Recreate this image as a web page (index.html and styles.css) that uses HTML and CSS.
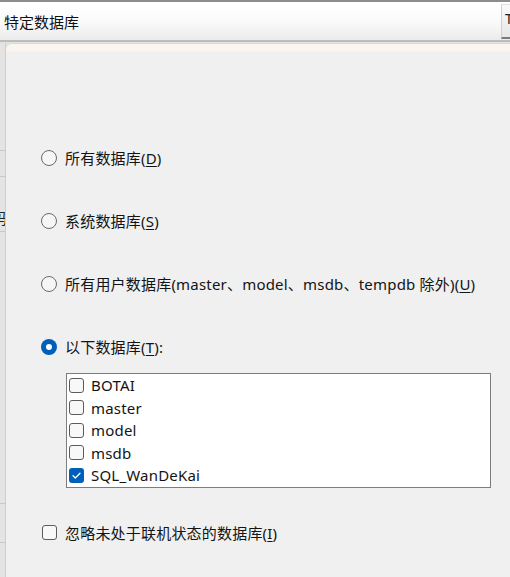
FILE: index.html
```html
<!DOCTYPE html>
<html lang="zh-CN">
<head>
<meta charset="utf-8">
<title>特定数据库</title>
<link rel="stylesheet" href="styles.css">
</head>
<body>
<div class="topbar">
  <span class="title">特定数据库</span>
  <span class="tbtn"><span class="tglyph">T</span></span>
</div>
<div class="main">
  <div class="strip">
    <div class="cell h108"></div>
    <div class="cell h26"></div>
    <div class="cell h54"><span class="sglyph">码</span></div>
    <div class="cell h272"></div>
    <div class="cell h39"></div>
  </div>
  <div class="panel">
    <label class="opt"><span class="radio"></span><span class="txt">所有数据库(<u>D</u>)</span></label>
    <label class="opt"><span class="radio"></span><span class="txt">系统数据库(<u>S</u>)</span></label>
    <label class="opt"><span class="radio"></span><span class="txt">所有用户数据库(master、model、msdb、tempdb 除外)(<u>U</u>)</span></label>
    <label class="opt"><span class="radio on"></span><span class="txt">以下数据库(<u>T</u>):</span></label>
    <div class="listbox">
      <div class="item"><span class="cb"></span><span class="txt">BOTAI</span></div>
      <div class="item"><span class="cb"></span><span class="txt">master</span></div>
      <div class="item"><span class="cb"></span><span class="txt">model</span></div>
      <div class="item"><span class="cb"></span><span class="txt">msdb</span></div>
      <div class="item"><span class="cb on"><svg viewBox="0 0 15 15" width="15" height="15"><path d="M4 7.8 L6.3 10 L11 5.2" fill="none" stroke="#fff" stroke-width="1.3" stroke-linecap="round" stroke-linejoin="round"/></svg></span><span class="txt">SQL_WanDeKai</span></div>
    </div>
    <label class="opt chk"><span class="cb"></span><span class="txt">忽略未处于联机状态的数据库(<u>I</u>)</span></label>
  </div>
</div>
</body>
</html>
```

FILE: styles.css
```css
* { box-sizing: border-box; }
html, body {
  margin: 0;
  padding: 0;
}
body {
  width: 510px;
  height: 577px;
  overflow: hidden;
  background: #e2e2e2;
  font-family: "Noto Sans", "Noto Sans CJK SC", sans-serif;
  font-size: 15px;
  color: #141414;
}
.topbar {
  height: 42px;
  border-top: 2px solid #8c8c8c;
  border-bottom: 2px solid #bcbcbc;
  background: linear-gradient(#ffffff, #fcfcfc 45%, #ebebeb);
  display: flex;
  align-items: center;
  justify-content: space-between;
  padding-left: 4px;
}
.title {
  font-family: "Noto Sans CJK SC", sans-serif;
  font-size: 15px;
  color: #111;
  line-height: 20px;
  margin-top: 1px;
}
.tbtn {
  width: 9px;
  height: 35px;
  margin-top: 1px;
  border-left: 1px solid #d0d0d0;
  border-top: 1px solid #e0e0e0;
  border-bottom: 2px solid #7a7a7a;
  background: linear-gradient(#fafafa, #e6e6e6);
  overflow: hidden;
  display: flex;
  align-items: center;
  padding-left: 3px;
}
.tglyph {
  font-size: 14px;
  color: #222;
  margin-top: -6px;
}
.main {
  display: flex;
  height: 535px;
  padding-top: 1px;
}
.strip {
  width: 6px;
  flex: none;
  display: flex;
  flex-direction: column;
  background: #e4e4e4;
  border-right: 1px solid #cdcdcd;
  overflow: hidden;
}
.cell {
  border-bottom: 1px solid #c6c6c6;
  flex: none;
  overflow: hidden;
  position: relative;
}
.h108 { height: 108px; }
.h26 { height: 26px; }
.h54 { height: 55px; }
.h272 { height: 272px; }
.h39 { height: 39px; }
.sglyph {
  display: block;
  font-family: "Noto Sans CJK SC", sans-serif;
  font-size: 15px;
  line-height: 20px;
  margin-top: 31px;
  margin-left: -8px;
  color: #222;
}
.panel {
  flex: 1;
  border-top-left-radius: 6px;
  border-top: 1px solid #dadada;
  background: linear-gradient(#faf5ee 0, #faf5ee 7px, #f0f0f0 8px);
  padding: 103px 0 0 35px;
  display: flex;
  flex-direction: column;
  align-items: flex-start;
}
.opt {
  display: flex;
  align-items: center;
  height: 22px;
  gap: 8px;
  margin-bottom: 41px;
  white-space: nowrap;
}
.opt:nth-of-type(4) { margin-bottom: 15px; }
.txt {
  line-height: 22px;
  letter-spacing: 0.2px;
}
u { text-decoration-thickness: 1px; text-underline-offset: 2px; }
.radio {
  width: 16px;
  height: 16px;
  border-radius: 50%;
  border: 1px solid #6a6a6a;
  background: #f6f6f6;
  flex: none;
  position: relative;
}
.radio.on {
  border: none;
  background: #005fb8;
}
.radio.on::after {
  content: "";
  position: absolute;
  left: 5px;
  top: 5px;
  width: 6px;
  height: 6px;
  border-radius: 50%;
  background: #fff;
}
.listbox {
  margin-left: 25px;
  width: 425px;
  height: 115px;
  border: 1px solid #7d7d7d;
  background: #fff;
  padding: 0 0 0 2px;
  display: flex;
  flex-direction: column;
  margin-bottom: 34px;
}
.item {
  display: flex;
  align-items: center;
  gap: 7px;
  height: 22.5px;
}
.cb {
  width: 15px;
  height: 15px;
  border: 1px solid #5c5c5c;
  border-radius: 3px;
  background: #f8f8f8;
  flex: none;
  display: flex;
}
.cb.on {
  border: none;
  background: #005fb8;
}
.chk { margin-left: 1px; }
```
